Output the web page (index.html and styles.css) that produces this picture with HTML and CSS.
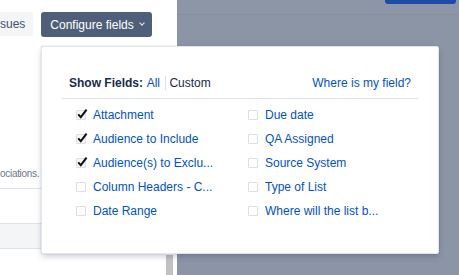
FILE: index.html
```html
<!DOCTYPE html>
<html lang="en">
<head>
  <meta charset="UTF-8" />
  <title>Configure fields</title>
  <link rel="stylesheet" href="styles.css">
</head>
<body>

  <div class="issue-panel">
    <div class="toolbar">
      <button class="btn btn-light">sues</button>
      <button class="btn btn-dark">Configure fields <span class="chevron"></span></button>
    </div>
    <p class="note">ociations.</p>
    <div class="panel-row"></div>
    <div class="panel-footer"></div>
  </div>

  <div class="scroll-track"><div class="scroll-thumb"></div></div>

  <div class="blanket">
    <div class="blanket-header"><span class="blanket-btn"></span></div>
  </div>

  <div class="field-popup">
    <div class="popup-head">
      <div class="show-fields">
        <b>Show Fields:</b>
        <a class="mode active">All</a>
        <a class="mode">Custom</a>
      </div>
      <a class="where-link">Where is my field?</a>
    </div>

    <ul class="field-list">
      <li><span class="check checked"><svg viewBox="0 0 12 12"><path d="M2.2 6.4 L4.8 9.2 L10.6 1.6" /></svg></span><span class="field-name">Attachment</span></li>
      <li><span class="check"></span><span class="field-name">Due date</span></li>
      <li><span class="check checked"><svg viewBox="0 0 12 12"><path d="M2.2 6.4 L4.8 9.2 L10.6 1.6" /></svg></span><span class="field-name">Audience to Include</span></li>
      <li><span class="check"></span><span class="field-name">QA Assigned</span></li>
      <li><span class="check checked"><svg viewBox="0 0 12 12"><path d="M2.2 6.4 L4.8 9.2 L10.6 1.6" /></svg></span><span class="field-name" title="Audience(s) to Exclude">Audience(s) to Exclu...</span></li>
      <li><span class="check"></span><span class="field-name">Source System</span></li>
      <li><span class="check"></span><span class="field-name" title="Column Headers - CSV">Column Headers - C...</span></li>
      <li><span class="check"></span><span class="field-name">Type of List</span></li>
      <li><span class="check"></span><span class="field-name">Date Range</span></li>
      <li><span class="check"></span><span class="field-name" title="Where will the list be used">Where will the list b...</span></li>
    </ul>
  </div>

</body>
</html>
```

FILE: styles.css
```css
* {
  margin: 0; padding: 0; box-sizing: border-box;
}
html, body {
  width: 459px;
  height: 275px;
  overflow: hidden;
  font-family: 'Liberation Sans', Arial, sans-serif;
  font-size: 12px;
  color: #172b4d;
  background: #fff;
}
body {
  display: flex;
}

.issue-panel {
  width: 162px;
  flex-shrink: 0;
  overflow: hidden;
  display: flex;
  flex-direction: column;
}

.toolbar {
  display: flex;
  gap: 8px;
  padding-top: 12px;
}

.btn {
  height: 24px;
  padding: 0 8px;
  border: none;
  border-radius: 3px;
  font-family: inherit;
  font-size: 12px;
  white-space: nowrap;
}
.btn-light {
  background: #f4f5f7;
  color: #42526e;
  padding-left: 0;
  border-radius: 0 3px 3px 0;
}
.btn-dark {
  height: 25px;
  padding: 0 8px 0 9px;
  background: #505f79;
  color: #fff;
  display: flex;
  align-items: center;
  gap: 6px;
}
.chevron {
  width: 4px;
  height: 4px;
  border-right: 1.5px solid #e6e9ee;
  border-bottom: 1.5px solid #e6e9ee;
  transform: rotate(45deg);
  margin-top: -3px;
}

.note {
  margin-top: 131px;
  font-size: 10px;
  letter-spacing: -0.3px;
  color: #6b778c;
  white-space: nowrap;
}

.panel-row {
  height: 35px;
  margin-top: 9px;
  border-top: 1px solid #dfe1e6;
}
.panel-footer {
  height: 26px;
  background: #f4f5f7;
  border-top: 1px solid #dfe1e6;
  border-bottom: 1px solid #dfe1e6;
}

.scroll-track {
  width: 15px;
  flex-shrink: 0;
  display: flex;
  flex-direction: column;
  justify-content: flex-end;
  padding: 0 4px;
}
.scroll-thumb {
  height: 20px;
  background: #c1c1c1;
}

.blanket {
  flex: 1;
  background: #8b95a6;
}
.blanket-header {
  height: 15px;
  background: #8c96a7;
  border-bottom: 1px solid #848e9f;
  display: flex;
  justify-content: flex-end;
  padding-right: 3px;
}
.blanket-btn {
  width: 71px;
  height: 4px;
  background: #1f4aa8;
  border-radius: 0 0 3px 3px;
}

/* popup */
.field-popup {
  position: absolute;
  left: 41px;
  top: 46px;
  width: 398px;
  height: 208px;
  background: #fff;
  border: 1px solid #e4e6ea;
  border-radius: 2px;
  box-shadow: 0 3px 6px -1px rgba(9, 30, 66, 0.25), 0 0 1px rgba(9, 30, 66, 0.3);
  padding: 28px 20px 0;
}

.popup-head {
  display: flex;
  justify-content: space-between;
  line-height: 16px;
  padding: 0 7px 7px;
  border-bottom: 1px solid #dfe1e6;
}
.show-fields b {
  font-weight: 700;
  margin-right: 1px;
}
.mode {
  color: #172b4d;
}
.mode.active {
  color: #0052cc;
  padding-right: 5px;
  border-right: 1px solid #dfe1e6;
}
.where-link {
  color: #0052cc;
}

.field-list {
  list-style: none;
  margin-top: 4px;
  padding-left: 14px;
  display: grid;
  grid-template-columns: 172px 172px;
}
.field-list li {
  height: 24px;
  display: flex;
  align-items: center;
  gap: 7px;
  white-space: nowrap;
}
.field-name {
  color: #0052cc;
}

.check {
  position: relative;
  width: 10px;
  height: 10px;
  border: 1px solid #dcdee3;
  border-radius: 1px;
  background: #fff;
  flex-shrink: 0;
}
.check.checked {
  background: #f4f5f7;
}
.check svg {
  position: absolute;
  left: -1px;
  top: -3px;
  width: 12px;
  height: 12px;
  fill: none;
  stroke: #111;
  stroke-width: 2;
}
```
